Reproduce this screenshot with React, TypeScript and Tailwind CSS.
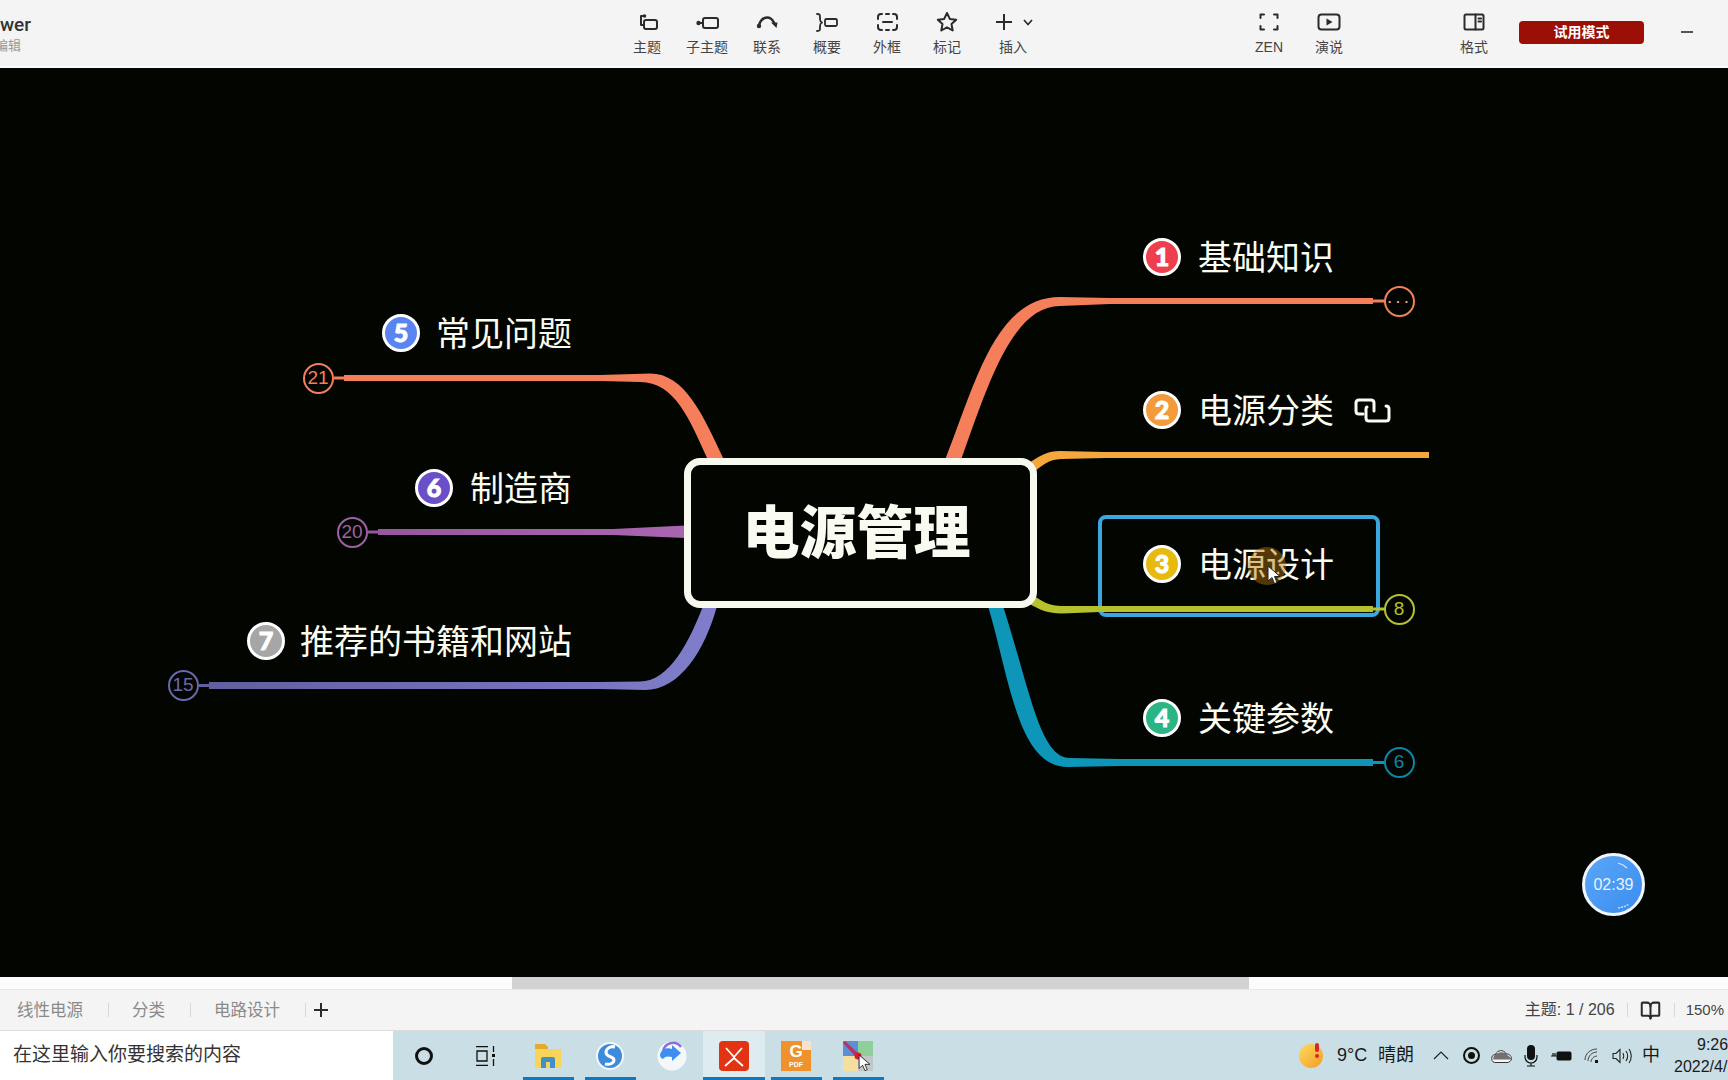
import { BookOpen } from "lucide-react";
import type { ReactNode } from "react";

const canvasBg = "bg-[#030500]";

function ToolItem({ label, className, children }: { label: string; className?: string; children: ReactNode }) {
  return (
    <div className={`flex flex-col items-center shrink-0 w-[60px] ${className ?? ""}`}>
      <div className="h-[24px] mt-[10px] flex items-center justify-center">{children}</div>
      <span className="mt-[4px] text-[14px] leading-[18px] text-[#444]">{label}</span>
    </div>
  );
}

const icon = { width: 24, height: 24, viewBox: "0 0 24 24", fill: "none", stroke: "#2b2b2b", strokeWidth: 2, strokeLinecap: "round" as const, strokeLinejoin: "round" as const };

function Toolbar() {
  return (
    <header className="h-[68px] shrink-0 flex bg-[#f4f4f4] border-b-2 border-[#fbfbfb]">
      <div className="w-[617px] shrink-0 pt-[14px] overflow-hidden">
        <div className="text-[19px] leading-[22px] font-['Roboto',sans-serif] font-medium text-[#333]">wer</div>
        <div className="-ml-[5px] mt-[2px] text-[13px] leading-[16px] text-[#999]">编辑</div>
      </div>
      <ToolItem label="主题">
        <svg {...icon}>
          <rect x="9" y="10" width="13" height="9" rx="2" />
          <path d="M9 6H6v9h3" />
          <circle cx="9.500" cy="6" r="1.800" fill="#2b2b2b" stroke="none" />
        </svg>
      </ToolItem>
      <ToolItem label="子主题">
        <svg {...icon}>
          <rect x="8" y="8" width="15" height="10" rx="2" />
          <path d="M4 13h4" />
          <circle cx="3.500" cy="13" r="2.200" fill="#2b2b2b" stroke="none" />
        </svg>
      </ToolItem>
      <ToolItem label="联系">
        <svg {...icon} strokeWidth={2.4}>
          <path d="M4 15C6 9.500 9 7.500 12 7.500c3 0 5.500 2 7 5" />
          <circle cx="4" cy="16" r="2.200" fill="#2b2b2b" stroke="none" />
          <path d="M16 12.500h6.500l-1 5.500z" fill="#2b2b2b" stroke="none" />
        </svg>
      </ToolItem>
      <ToolItem label="概要">
        <svg {...icon} strokeWidth={1.800}>
          <path d="M2 4c3 0 3 1 3 3v2c0 2 1 3 2 3.500-1 .5-2 1.500-2 3.500v2c0 2 0 3-3 3" />
          <rect x="10" y="9" width="12" height="7" rx="1.500" />
        </svg>
      </ToolItem>
      <ToolItem label="外框">
        <svg {...icon}>
          <path d="M7 4H6a3 3 0 0 0-3 3v2M3 15v2a3 3 0 0 0 3 3h1M11 4h3M11 20h3M18 4h1a3 3 0 0 1 3 3v2M22 15v2a3 3 0 0 1-3 3h-1" />
          <path d="M8 12h9" />
        </svg>
      </ToolItem>
      <ToolItem label="标记">
        <svg {...icon}>
          <path d="M12 3l2.800 5.900 6.400.8-4.700 4.400 1.200 6.400L12 17.300l-5.700 3.200 1.200-6.400L2.800 9.700l6.400-.8z" />
        </svg>
      </ToolItem>
      <ToolItem label="插入" className="w-[72px]">
        <div className="flex items-center gap-[10px] pl-[2px]">
          <svg width="18" height="18" viewBox="0 0 18 18" fill="none" stroke="#2b2b2b" strokeWidth="2">
            <path d="M9 1v16M1 9h16" />
          </svg>
          <svg width="10" height="7" viewBox="0 0 10 7" fill="none" stroke="#2b2b2b" strokeWidth="1.700">
            <path d="M1 1l4 4.500L9 1" />
          </svg>
        </div>
      </ToolItem>
      <ToolItem label="ZEN" className="ml-[190px]">
        <svg {...icon}>
          <path d="M7 4.500H3.500V8M17 4.500h3.500V8M3.500 16v3.500H7M20.500 16v3.500H17" />
        </svg>
      </ToolItem>
      <ToolItem label="演说">
        <svg {...icon}>
          <rect x="1.500" y="4.500" width="21" height="15" rx="3" />
          <path d="M9.500 8.500l6 3.500-6 3.500z" fill="#2b2b2b" stroke="none" />
        </svg>
      </ToolItem>
      <ToolItem label="格式" className="ml-[85px]">
        <svg {...icon}>
          <rect x="2.500" y="4.500" width="19" height="15" rx="1.500" />
          <path d="M13.500 4.500v15M16.500 8.500h2.500M16.500 11.500h2.500" />
        </svg>
      </ToolItem>
      <div className="ml-[15px] mt-[21px] w-[125px] h-[23px] rounded-[4px] bg-[#9b0f06] flex items-center justify-center text-[14px] font-bold text-white">
        试用模式
      </div>
      <div className="ml-[37px] mt-[31px] w-[12px] h-[2px] bg-[#555]" />
    </header>
  );
}

function Topic({ n, text, pos, color, trailing }: { n: string; text: string; pos: string; color: string; trailing?: ReactNode }) {
  return (
    <div className={`absolute flex items-center h-[40px] ${pos}`}>
      <div className={`w-[38px] h-[38px] rounded-full border-[3px] border-white flex items-center justify-center text-[25px] font-['Lato',sans-serif] font-black [-webkit-text-stroke:1px_white] text-white ${color}`}>
        {n}
      </div>
      <span className="mt-[2px] text-[34px] leading-[40px] text-[#fbfcf2] whitespace-nowrap">{text}</span>
      {trailing}
    </div>
  );
}

function Count({ label, className }: { label: string; className: string }) {
  return (
    <div className={`absolute w-[31px] h-[31px] rounded-full border-2 flex items-center justify-center text-[19px] ${canvasBg} ${className}`}>
      {label}
    </div>
  );
}

function Branches() {
  return (
    <svg className="absolute inset-0" width="1728" height="909" viewBox="0 68 1728 909">
      <defs>
        <linearGradient id="b7" x1="0" x2="1" y1="0" y2="0">
          <stop offset="0" stopColor="#625f9f" />
          <stop offset="1" stopColor="#807dcb" />
        </linearGradient>
        <linearGradient id="b6" x1="0" x2="1" y1="0" y2="0">
          <stop offset="0" stopColor="#96589d" />
          <stop offset="1" stopColor="#a866b0" />
        </linearGradient>
      </defs>
      {/* right side */}
      <path d="M945 460C975 385 995 297 1060 297L1110 298H1373V304H1110L1060 306C1012 306 988 385 961 460Z" fill="#f47f5a" />
      <path d="M1373 299.500H1385V302.500H1373Z" fill="#f47f5a" />
      <path d="M1028 464C1040 455 1048 451 1060 451L1105 452H1429V458H1105L1062 459C1052 459 1046 462 1034 472Z" fill="#f3a73c" />
      <path d="M1030 593C1042 602 1050 606 1062 606H1373V612H1100L1062 613.500C1048 613.500 1040 610 1028 603Z" fill="#b6c22d" />
      <path d="M1373 607.500H1385V610.500H1373Z" fill="#b6c22d" />
      <path d="M988 606C1010 680 1018 767 1068 767L1120 766H1373V759H1120L1070 758C1040 758 1030 690 1003 606Z" fill="#0e96b8" />
      <path d="M1373 761H1385V764H1373Z" fill="#0e96b8" />
      {/* left side */}
      <path d="M344 375H600L650 373.500C685 373.500 703 415 724 460H708C690 420 675 382 640 382L600 381H344Z" fill="#f47f5a" />
      <path d="M334 376.500H344V379.500H334Z" fill="#f47f5a" />
      <path d="M378 529H613L686 525.500V538L613 535H378Z" fill="url(#b6)" />
      <path d="M368 530.500H378V533.500H368Z" fill="#96589d" />
      <path d="M209 682H600L640 681.500C670 681.500 690 640 703 606H717C705 650 680 690 645 690L600 689H209Z" fill="url(#b7)" />
      <path d="M199 684H209V687H199Z" fill="#625f9f" />
    </svg>
  );
}

function Canvas() {
  return (
    <main className={`relative h-[909px] shrink-0 overflow-hidden ${canvasBg}`}>
      <div className="absolute left-[1098px] top-[447px] w-[282px] h-[102px] rounded-[8px] border-4 border-[#3aa8df]" />
      <Branches />
      <div className={`absolute left-[684px] top-[390px] w-[353px] h-[150px] rounded-[16px] border-[7px] border-[#f8f9ee] flex items-center justify-center ${canvasBg}`}>
        <span className="-mt-[1px] mr-[8px] text-[57px] leading-[64px] font-black text-[#f9faf0]">电源管理</span>
      </div>

      <Topic n="1" text="基础知识" pos="left-[1143px] top-[169px] gap-[17px]" color="bg-[#ee3f4d]" />
      <Topic
        n="2"
        text="电源分类"
        pos="left-[1143px] top-[322px] gap-[17px]"
        color="bg-[#f39a3d]"
        trailing={
          <svg className="ml-[3px] mt-[2px]" width="37" height="26" viewBox="0 0 37 26" fill="none" stroke="#fbfcf2" strokeWidth="3" strokeLinecap="round">
            <path d="M9 16H5Q2 16 2 13V5Q2 2 5 2H17Q20 2 20 5V13" />
            <path d="M13 9Q12 9 12 11V20Q12 23 15 23H32Q35 23 35 20V11Q35 8 32 8" />
          </svg>
        }
      />
      <Topic n="3" text="电源设计" pos="left-[1143px] top-[476px] gap-[17px]" color="bg-[#e8b90f]" />
      <Topic n="4" text="关键参数" pos="left-[1143px] top-[630px] gap-[17px]" color="bg-[#2bb584]" />
      <Topic n="5" text="常见问题" pos="left-[382px] top-[245px] gap-[16px]" color="bg-[#5a84f2]" />
      <Topic n="6" text="制造商" pos="left-[415px] top-[400px] gap-[17px]" color="bg-[#6a4fc8]" />
      <Topic n="7" text="推荐的书籍和网站" pos="left-[247px] top-[553px] gap-[15px]" color="bg-[#a6a6a6]" />

      <Count label="···" className="left-[1383.500px] top-[217.500px] border-[#f47f5a] text-[#f9a184] tracking-[2px]" />
      <Count label="8" className="left-[1383.500px] top-[525.500px] border-[#b6c22d] text-[#b6c22d]" />
      <Count label="6" className="left-[1383.500px] top-[678.500px] border-[#0e86a6] text-[#0e86a6]" />
      <Count label="21" className="left-[302.500px] top-[294.500px] border-[#f47f5a] text-[#f47f5a]" />
      <Count label="20" className="left-[336.500px] top-[448.500px] border-[#a060a8] text-[#a060a8]" />
      <Count label="15" className="left-[167.500px] top-[601.500px] border-[#6a68ad] text-[#6a68ad]" />

      {/* pointer highlight */}
      <div className="absolute left-[1248px] top-[479px] w-[38px] h-[38px] rounded-full bg-[#b87a10]/45" />
      <svg className="absolute left-[1267px] top-[497px]" width="14" height="20" viewBox="0 0 14 20">
        <path d="M1 1v15l4-3.500 2.500 6 2.500-1-2.500-6H13z" fill="#fff" stroke="#222" strokeWidth="1" />
      </svg>

      {/* timer */}
      <div className="absolute left-[1582px] top-[785px] w-[63px] h-[63px] rounded-full border-[3px] border-[#f2f6fb] bg-gradient-to-br from-[#5aa7f7] to-[#3a8cf0] flex items-center justify-center text-[16px] text-[#e8f2ff]">
        02:39
      </div>
      <svg className="absolute left-[1582px] top-[785px]" width="63" height="63" viewBox="0 0 63 63" fill="none" stroke="#dcecff" strokeWidth="1.200">
        <path d="M36 10c4 1 7 3 9 5" />
        <path d="M36 55c4-.5 8-2 11-4" strokeDasharray="2 1" />
      </svg>
    </main>
  );
}

function BottomBar() {
  return (
    <>
      <div className="h-[12px] shrink-0 bg-[#fcfcfc] pl-[512px]">
        <div className="w-[737px] h-full bg-[#d2d2d2]" />
      </div>
      <div className="h-[41px] shrink-0 flex items-center bg-[#f4f4f4] border-t border-[#e8e8e8] pl-[17px] pr-[4px] text-[16.500px] text-[#8a8a8a]">
        <span>线性电源</span>
        <div className="w-px h-[14px] bg-[#d8d8d8] ml-[25px] mr-[23px]" />
        <span>分类</span>
        <div className="w-px h-[14px] bg-[#d8d8d8] ml-[25px] mr-[23px]" />
        <span>电路设计</span>
        <div className="w-px h-[14px] bg-[#d8d8d8] ml-[25px] mr-[8px]" />
        <svg width="14" height="14" viewBox="0 0 14 14" stroke="#2b2b2b" strokeWidth="2">
          <path d="M7 0v14M0 7h14" />
        </svg>
        <span className="ml-auto text-[16px] text-[#444]">主题: 1 / 206</span>
        <div className="w-px h-[14px] bg-[#d8d8d8] ml-[12px] mr-[12px]" />
        <BookOpen size={21} color="#2b2b2b" strokeWidth={2.300} />
        <div className="w-px h-[14px] bg-[#d8d8d8] ml-[13px] mr-[11px]" />
        <span className="text-[15px] text-[#444]">150%</span>
      </div>
    </>
  );
}

function TaskCell({ underline, active, children }: { underline?: boolean; active?: boolean; children: ReactNode }) {
  return (
    <div className={`relative w-[62px] h-full shrink-0 flex items-center justify-center ${active ? "bg-[#deebef]" : ""}`}>
      {children}
      {underline && <div className={`absolute bottom-0 h-[3px] bg-[#0f78c0] ${active ? "left-0 right-0" : "left-[6px] right-[5px]"}`} />}
    </div>
  );
}

function Taskbar() {
  return (
    <footer className="h-[50px] shrink-0 flex items-center bg-[#c9dee5] border-t border-[#dcdcdc] text-[#1a1a1a] overflow-hidden">
      <div className="w-[393px] h-full shrink-0 bg-white flex items-center pl-[13px] text-[19px] text-[#333]">在这里输入你要搜索的内容</div>
      <TaskCell>
        <div className="w-[18px] h-[18px] rounded-full border-[3.500px] border-[#111]" />
      </TaskCell>
      <TaskCell>
        <svg width="22" height="20" viewBox="0 0 22 20" fill="none" stroke="#111" strokeWidth="1.300">
          <path d="M1 .5h12M1 19.500h12M2 5h10v10H2zM18.500 0v6M18.500 13v7" />
          <rect x="17" y="8" width="3" height="3" fill="#111" stroke="none" />
        </svg>
      </TaskCell>
      <TaskCell underline>
        <svg width="28" height="26" viewBox="0 0 28 26">
          <path d="M1 2a1 1 0 0 1 1-1h9l3 3v4H1z" fill="#e7a92c" />
          <path d="M1 6h26v19H1z" fill="#f8d558" />
          <path d="M7 25V16q0-2 2-2h10q2 0 2 2v9h-5v-6h-4v6z" fill="#3f91c6" />
        </svg>
      </TaskCell>
      <TaskCell underline>
        <svg width="28" height="28" viewBox="0 0 28 28">
          <circle cx="14" cy="14" r="14" fill="#f2f7fa" />
          <circle cx="14" cy="14" r="12" fill="#3d8bdb" />
          <path d="M19 5C14 3.500 10 7 10 10.500c0 5 8 3.500 8 7.500 0 3-4 5-9 4" fill="none" stroke="#fff" strokeWidth="3" />
        </svg>
      </TaskCell>
      <TaskCell underline={false}>
        <svg width="30" height="30" viewBox="0 0 30 30">
          <circle cx="15" cy="15" r="14.500" fill="#f5f8fb" />
          <path d="M6 11A10 10 0 0 1 24 6" fill="none" stroke="#8a6fd8" strokeWidth="2.500" />
          <path d="M3 14C4 8 10 6 15 8V4l9 8-9 8v-4c-4-1-7-1-9 2-2-1-3-2-3-4z" fill="#3d8ef0" />
        </svg>
      </TaskCell>
      <TaskCell underline active>
        <svg width="30" height="30" viewBox="0 0 30 30">
          <rect width="30" height="30" rx="4" fill="#e23312" />
          <path d="M7 7l8 9 8-9M6 25l9-8 9 8" fill="none" stroke="#fff" strokeWidth="1.800" />
        </svg>
      </TaskCell>
      <TaskCell underline>
        <div className="relative w-[30px] h-[30px] bg-[#f0922c] flex flex-col items-center pt-[2px]">
          <span className="text-[17px] leading-[18px] font-bold text-white">G</span>
          <span className="text-[7px] leading-[8px] font-bold text-white">PDF</span>
          <div className="absolute right-0 top-0 w-[9px] h-[9px] bg-[#f7e2cb]" />
        </div>
      </TaskCell>
      <TaskCell underline>
        <div className="relative">
          <svg width="30" height="30" viewBox="0 0 30 30">
            <rect width="15" height="15" fill="#5b8fd8" />
            <rect x="15" width="15" height="15" fill="#8fd09a" />
            <rect y="15" width="15" height="15" fill="#f5dfa0" />
            <rect x="15" y="15" width="15" height="15" fill="#bfc7c8" />
            <path d="M0 2L2 0 17 14l-3 3z" fill="#b3355f" />
            <circle cx="15" cy="15" r="3.500" fill="#d81e2a" />
          </svg>
          <svg className="absolute left-[15px] top-[13px]" width="13" height="18" viewBox="0 0 14 20">
            <path d="M1 1v15l4-3.500 2.500 6 2.500-1-2.500-6H13z" fill="#fff" stroke="#222" strokeWidth="1" />
          </svg>
        </div>
      </TaskCell>

      {/* tray */}
      <div className="relative ml-[410px] w-[24px] h-[24px] shrink-0 rounded-full bg-gradient-to-br from-[#f9dc5c] to-[#f59b20]">
        <div className="absolute left-[16px] -top-[1px] w-[4px] h-[9px] rounded-full bg-[#d8262c]" />
        <div className="absolute left-[16px] top-[10px] w-[4px] h-[4px] rounded-full bg-[#d8262c]" />
      </div>
      <span className="ml-[14px] text-[18px] w-[30px] shrink-0 whitespace-nowrap">9°C</span>
      <span className="ml-[11px] text-[18px] w-[36px] shrink-0">晴朗</span>
      <div className="ml-[12px] w-[30px] flex justify-center shrink-0">
        <svg width="16" height="9" viewBox="0 0 16 9" fill="none" stroke="#222" strokeWidth="1.200">
          <path d="M1 8l7-7 7 7" />
        </svg>
      </div>
      <div className="w-[30px] flex justify-center shrink-0">
        <div className="w-[17px] h-[17px] rounded-full border-2 border-[#111] flex items-center justify-center">
          <div className="w-[7px] h-[7px] rounded-full bg-[#111]" />
        </div>
      </div>
      <div className="w-[30px] flex justify-center shrink-0">
        <svg width="21" height="14" viewBox="0 0 21 14">
          <path d="M5 13.500a4 4 0 0 1-.5-8C6 1 13 0 15 5c3-.5 5.500 2 5.500 4.500S18 13.500 16 13.500z" fill="#f5f7f8" stroke="#333" strokeWidth="1" />
          <path d="M3 7c3-4 9-5 12-2l5 4c0 .5-.2 1-.5 1.500H2.300C2.200 9 2.400 8 3 7z" fill="#444" opacity=".75" />
        </svg>
      </div>
      <div className="w-[30px] flex justify-center shrink-0">
        <svg width="14" height="22" viewBox="0 0 14 22" fill="none" stroke="#111" strokeWidth="1.200">
          <rect x="3" y="0" width="8" height="15" rx="4" fill="#111" stroke="none" />
          <path d="M1 10v2a6 6 0 0 0 12 0v-2M7 18v3M3 21h8" />
        </svg>
      </div>
      <div className="w-[31px] flex justify-center shrink-0">
        <svg width="21" height="12" viewBox="0 0 21 12">
          <rect x="6" y="2" width="14" height="8" rx="1" fill="#111" stroke="#111" />
          <path d="M0 6h6M2 3v3M4 3v3" stroke="#111" strokeWidth="1.200" />
        </svg>
      </div>
      <div className="w-[30px] flex justify-center shrink-0">
        <svg width="17" height="16" viewBox="0 0 17 16" fill="none" stroke="#444" strokeWidth="1">
          <path d="M1 12C1 6 6 1 13 1M4 13C4 8 8 4 13 4M7 14c0-3 3-6 6-6" />
          <rect x="11" y="12" width="3" height="3" fill="#111" stroke="none" />
        </svg>
      </div>
      <div className="w-[29px] flex justify-center shrink-0">
        <svg width="20" height="16" viewBox="0 0 20 16" fill="none" stroke="#222" strokeWidth="1.100">
          <path d="M1 5.500h3L8 1.500v13l-4-4H1zM11 5c1 2 1 4 0 6M14 3c2 3 2 7 0 10M17 1c3 4 3 10 0 14" />
        </svg>
      </div>
      <span className="ml-[3px] w-[24px] text-center text-[18px] shrink-0">中</span>
      <div className="ml-[11px] flex flex-col items-start text-[16px] leading-[22px] whitespace-nowrap shrink-0">
        <span className="pl-[23px]">9:26</span>
        <span>2022/4/</span>
      </div>
    </footer>
  );
}

export default function App() {
  return (
    <div className="w-[1728px] h-[1080px] flex flex-col overflow-hidden font-['Liberation_Sans','Noto_Sans_CJK_SC',sans-serif]">
      <Toolbar />
      <Canvas />
      <BottomBar />
      <Taskbar />
    </div>
  );
}
